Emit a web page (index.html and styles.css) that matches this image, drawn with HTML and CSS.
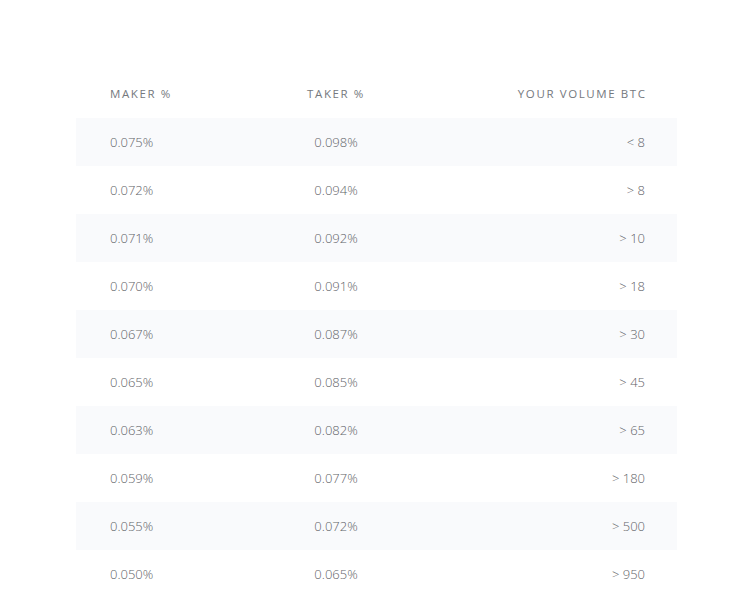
FILE: index.html
```html
<!DOCTYPE html>
<html>
<head>
<meta charset="utf-8">
<link rel="stylesheet" href="styles.css">
</head>
<body>
<div class="fees">
  <div class="row head">
    <div class="c1">Maker %</div>
    <div class="c2">Taker %</div>
    <div class="c3">Your volume BTC</div>
  </div>
  <div class="row"><div class="c1">0.075%</div><div class="c2">0.098%</div><div class="c3">&lt; 8</div></div>
  <div class="row"><div class="c1">0.072%</div><div class="c2">0.094%</div><div class="c3">&gt; 8</div></div>
  <div class="row"><div class="c1">0.071%</div><div class="c2">0.092%</div><div class="c3">&gt; 10</div></div>
  <div class="row"><div class="c1">0.070%</div><div class="c2">0.091%</div><div class="c3">&gt; 18</div></div>
  <div class="row"><div class="c1">0.067%</div><div class="c2">0.087%</div><div class="c3">&gt; 30</div></div>
  <div class="row"><div class="c1">0.065%</div><div class="c2">0.085%</div><div class="c3">&gt; 45</div></div>
  <div class="row"><div class="c1">0.063%</div><div class="c2">0.082%</div><div class="c3">&gt; 65</div></div>
  <div class="row"><div class="c1">0.059%</div><div class="c2">0.077%</div><div class="c3">&gt; 180</div></div>
  <div class="row"><div class="c1">0.055%</div><div class="c2">0.072%</div><div class="c3">&gt; 500</div></div>
  <div class="row"><div class="c1">0.050%</div><div class="c2">0.065%</div><div class="c3">&gt; 950</div></div>
</div>
</body>
</html>
```

FILE: styles.css
```css
html, body {
  margin: 0;
  padding: 0;
  background: #ffffff;
}
body {
  font-family: "Open Sans", "Liberation Sans", sans-serif;
  color: #5f6368;
}
.fees {
  width: 601px;
  margin: 69px 0 0 76px;
  display: flex;
  flex-direction: column;
}
.row {
  display: grid;
  grid-template-columns: 178px 96px 1fr;
  align-items: center;
  height: 48px;
  padding: 0 32px 0 34px;
  font-size: 13px;
  font-weight: 300;
}
.row:nth-child(even) {
  background: #f9fafc;
}
.head {
  height: 49px;
  font-size: 11.5px;
  font-weight: 400;
  text-transform: uppercase;
  letter-spacing: 1.6px;
  color: #75797e;
}
.head .c3 {
  margin-right: -1.6px;
}
.c2 {
  text-align: center;
}
.c3 {
  text-align: right;
}
```
